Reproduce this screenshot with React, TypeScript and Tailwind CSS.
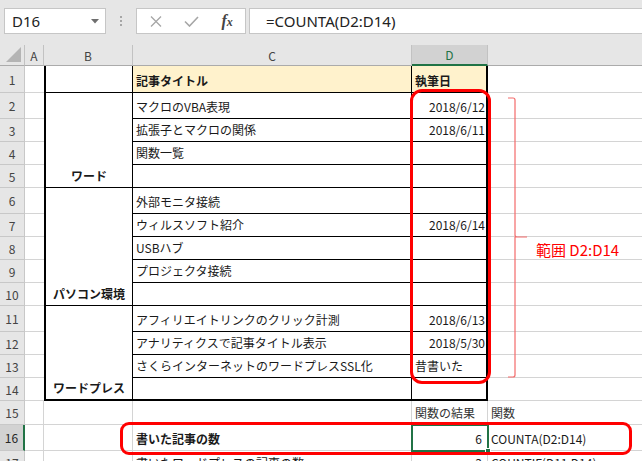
import React from 'react';

type Row = {
  n: number;
  title: string;
  date: string;
  dateLeft?: boolean;
  group?: { label: string; span: string; last?: boolean };
  last?: boolean;
};

const rows: Row[] = [
  { n: 2, title: 'マクロのVBA表現', date: '2018/6/12', group: { label: 'ワード', span: 'row-span-4' } },
  { n: 3, title: '拡張子とマクロの関係', date: '2018/6/11' },
  { n: 4, title: '関数一覧', date: '' },
  { n: 5, title: '', date: '' },
  { n: 6, title: '外部モニタ接続', date: '', group: { label: 'パソコン環境', span: 'row-span-5' } },
  { n: 7, title: 'ウィルスソフト紹介', date: '2018/6/14' },
  { n: 8, title: 'USBハブ', date: '' },
  { n: 9, title: 'プロジェクタ接続', date: '' },
  { n: 10, title: '', date: '' },
  { n: 11, title: 'アフィリエイトリンクのクリック計測', date: '2018/6/13', group: { label: 'ワードプレス', span: 'row-span-4', last: true } },
  { n: 12, title: 'アナリティクスで記事タイトル表示', date: '2018/5/30' },
  { n: 13, title: 'さくらインターネットのワードプレスSSL化', date: '昔書いた', dateLeft: true },
  { n: 14, title: '', date: '', last: true },
];

function RowHead({ n, active }: { n: number; active?: boolean }) {
  if (active) {
    return (
      <div className="flex items-center justify-center border-b border-b-[#c8c8c8] border-r-2 border-r-[#217346] bg-[#d2d2d2] text-[12px] text-[#262626]">
        {n}
      </div>
    );
  }
  return (
    <div className="flex items-center justify-center border-b border-r border-[#c8c8c8] bg-[#e6e6e6] text-[12px] text-[#444]">
      {n}
    </div>
  );
}

function ColHead({ label, active, last }: { label: string; active?: boolean; last?: boolean }) {
  if (active) {
    return (
      <div className="flex items-center justify-center border-r border-r-[#c2c2c2] border-b-2 border-b-[#217346] bg-[#d2d2d2] text-[12px] text-[#217346]">
        {label}
      </div>
    );
  }
  return (
    <div
      className={
        last
          ? 'border-b border-[#ababab] bg-[#e6e6e6]'
          : 'flex items-center justify-center border-r border-r-[#c2c2c2] border-b border-b-[#ababab] bg-[#e6e6e6] text-[12px] text-[#444]'
      }
    >
      {label}
    </div>
  );
}

export default function App() {
  return (
    <div className="relative h-[461px] w-[642px] overflow-hidden bg-white font-['Noto_Sans_CJK_JP','Noto_Sans',sans-serif] text-[#1a1a1a]">
      {/* formula bar */}
      <div className="flex h-[45px] items-start bg-[#e6e6e6] pl-[4px] pt-[8px]">
        <div className="flex h-[26px] w-[102px] items-center justify-between border border-[#c6c6c6] bg-white pl-[7px] pr-[6px]">
          <span className="font-['Noto_Sans',sans-serif] text-[15px] text-[#222]">D16</span>
          <svg width="8" height="5" viewBox="0 0 8 5">
            <path d="M0 0 H8 L4 4.5 Z" fill="#6e6e6e" />
          </svg>
        </div>
        <div className="flex h-[26px] w-[30px] flex-col items-center justify-center gap-[2px]">
          <span className="h-[2px] w-[2px] bg-[#a6a6a6]" />
          <span className="h-[2px] w-[2px] bg-[#a6a6a6]" />
          <span className="h-[2px] w-[2px] bg-[#a6a6a6]" />
        </div>
        <div className="flex h-[26px] w-[110px] items-center border border-[#c6c6c6] bg-white pl-[1px]">
          <span className="flex w-[36px] justify-center">
            <svg width="12" height="11" viewBox="0 0 12 11">
              <path d="M1 0.5 L11 10.5 M11 0.5 L1 10.5" stroke="#a6a6a6" strokeWidth="1.3" />
            </svg>
          </span>
          <span className="flex w-[36px] justify-center">
            <svg width="15" height="11" viewBox="0 0 15 11">
              <path d="M1 5.5 L5.5 10 L14 1" stroke="#a6a6a6" strokeWidth="1.6" fill="none" />
            </svg>
          </span>
          <span className="flex w-[36px] items-baseline justify-center font-['Liberation_Serif',serif] text-[16px] font-bold italic leading-none text-[#444]">
            f<span className="text-[12px]">x</span>
          </span>
        </div>
        <div className="ml-[3px] flex h-[26px] flex-1 items-center border-y border-l border-[#c6c6c6] bg-white pl-[16px] font-['Noto_Sans',sans-serif] text-[15px] text-[#222]">
          =COUNTA(D2:D14)
        </div>
      </div>

      {/* sheet */}
      <div className="grid grid-cols-[25px_19px_89px_279px_76px_1fr] grid-rows-[21px_27px_26px_23px_23px_23px_26px_23px_23px_23px_23px_26px_23px_23px_23px_24px_26px_24px] text-[12px] leading-[17px]">
        <div className="relative border-r border-r-[#c2c2c2] border-b border-b-[#ababab] bg-[#e6e6e6]">
          <svg className="absolute bottom-[3px] right-[3px]" width="15" height="15" viewBox="0 0 15 15">
            <path d="M15 0 V15 H0 Z" fill="#b4b4b4" />
          </svg>
        </div>
        <ColHead label="A" />
        <ColHead label="B" />
        <ColHead label="C" />
        <ColHead label="D" active />
        <ColHead label="" last />

        {/* row 1 */}
        <RowHead n={1} />
        <div className="border-b border-[#d4d4d4]" />
        <div className="border-l-2 border-r border-b border-black" />
        <div className="flex items-end border-r border-b border-black bg-[#fff2cc] pb-[3px] pl-[3px] font-bold">記事タイトル</div>
        <div className="flex items-end border-r-2 border-b border-black bg-[#fff2cc] pb-[3px] pl-[3px] font-bold">執筆日</div>
        <div className="border-b border-[#d4d4d4]" />

        {rows.map((r) => (
          <React.Fragment key={r.n}>
            <RowHead n={r.n} />
            <div className="border-b border-[#d4d4d4]" />
            {r.group && (
              <div
                className={
                  (r.group.last ? 'border-b-2 ' : 'border-b ') +
                  r.group.span +
                  ' flex items-end justify-center border-l-2 border-r border-black pb-[3px] font-bold'
                }
              >
                {r.group.label}
              </div>
            )}
            <div
              className={
                (r.last ? 'border-b-2 ' : 'border-b ') +
                'flex items-end whitespace-nowrap border-r border-black pb-[3px] pl-[3px]'
              }
            >
              {r.title}
            </div>
            <div
              className={
                (r.last ? 'border-b-2 ' : 'border-b ') +
                (r.dateLeft ? 'justify-start pl-[3px] ' : 'justify-end pr-[1px] ') +
                'flex items-end whitespace-nowrap border-r-2 border-black pb-[3px]'
              }
            >
              {r.date}
            </div>
            <div className="border-b border-[#d4d4d4]" />
          </React.Fragment>
        ))}

        {/* row 15 */}
        <RowHead n={15} />
        <div className="border-r border-b border-[#d4d4d4]" />
        <div className="border-r border-b border-[#d4d4d4]" />
        <div className="border-r border-b border-[#d4d4d4]" />
        <div className="flex items-end whitespace-nowrap border-r border-b border-[#d4d4d4] pb-[3px] pl-[3px] text-[#333]">関数の結果</div>
        <div className="flex items-end whitespace-nowrap border-b border-[#d4d4d4] pb-[3px] pl-[3px] text-[#333]">関数</div>

        {/* row 16 */}
        <RowHead n={16} active />
        <div className="border-r border-b border-[#d4d4d4]" />
        <div className="border-r border-b border-[#d4d4d4]" />
        <div className="flex items-end whitespace-nowrap border-r border-b border-[#d4d4d4] pb-[3px] pl-[3px] font-bold">書いた記事の数</div>
        <div className="relative flex items-end justify-end border-r border-b border-[#d4d4d4] pb-[3px] pr-[5px]">
          6
          <div className="absolute -bottom-[2px] -left-[1px] -right-[2px] -top-[1px] border-2 border-[#217346]" />
          <div className="absolute -bottom-[4px] -right-[4px] h-[6px] w-[6px] border border-white bg-[#217346]" />
        </div>
        <div className="flex items-end whitespace-nowrap border-b border-[#d4d4d4] pb-[3px] pl-[3px]">COUNTA(D2:D14)</div>

        {/* row 17 */}
        <RowHead n={17} />
        <div className="border-r border-b border-[#d4d4d4]" />
        <div className="border-r border-b border-[#d4d4d4]" />
        <div className="flex items-end whitespace-nowrap border-r border-b border-[#d4d4d4] pb-[3px] pl-[3px]">書いたワードプレスの記事の数</div>
        <div className="flex items-end justify-end border-r border-b border-[#d4d4d4] pb-[3px] pr-[5px]">3</div>
        <div className="flex items-end whitespace-nowrap border-b border-[#d4d4d4] pb-[3px] pl-[3px]">COUNTIF(D11:D14)</div>
      </div>

      {/* annotations */}
      <div className="absolute left-[410px] top-[89px] h-[295px] w-[81px] rounded-[12px] border-[3px] border-[#ff0000]" />
      <div className="absolute left-[120px] top-[422px] h-[33px] w-[512px] rounded-[9px] border-[3px] border-[#ff0000]" />
      <svg className="absolute left-[500px] top-[90px]" width="32" height="295" viewBox="0 0 32 295">
        <path
          d="M8 8 H13 Q15 8 15 10 V145 Q15 147 17 147 H27 M15 147 V285 Q15 287 13 287 H8"
          stroke="#f36a6a"
          strokeWidth="1.2"
          fill="none"
        />
      </svg>
      <div className="absolute left-[536px] top-[240px] whitespace-nowrap text-[15px] leading-[20px] text-[#ff0000]">
        範囲 D2:D14
      </div>
    </div>
  );
}
